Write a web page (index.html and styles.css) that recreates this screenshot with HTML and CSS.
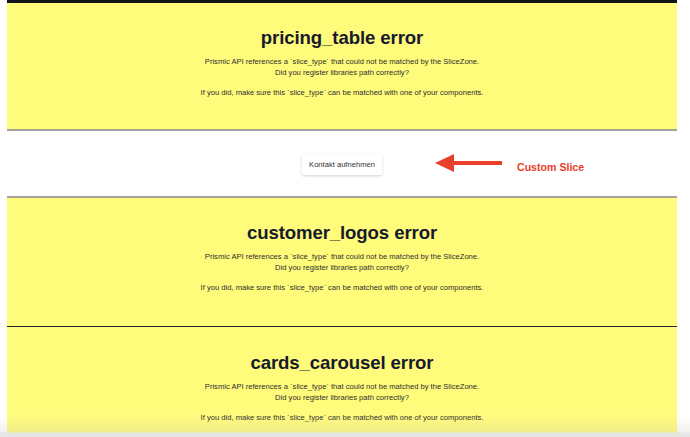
FILE: index.html
```html
<!DOCTYPE html>
<html lang="de">
<head>
<meta charset="utf-8">
<title>Slices</title>
<link rel="stylesheet" href="styles.css">
</head>
<body>
<main class="page">
  <div class="topbar"></div>
  <section class="slice-error">
    <h2 class="err-title">pricing_table error</h2>
    <p class="err-text">Prismic API references a `slice_type` that could not be matched by the SliceZone.<br>Did you register libraries path correctly?</p>
    <p class="err-text err-gap">If you did, make sure this `slice_type` can be matched with one of your components.</p>
  </section>
  <div class="sep sep-gray"></div>
  <section class="custom">
    <button class="btn">Kontakt aufnehmen</button>
  </section>
  <div class="sep sep-gray"></div>
  <section class="slice-error">
    <h2 class="err-title">customer_logos error</h2>
    <p class="err-text">Prismic API references a `slice_type` that could not be matched by the SliceZone.<br>Did you register libraries path correctly?</p>
    <p class="err-text err-gap">If you did, make sure this `slice_type` can be matched with one of your components.</p>
  </section>
  <div class="sep sep-dark"></div>
  <section class="slice-error slice-last">
    <h2 class="err-title">cards_carousel error</h2>
    <p class="err-text">Prismic API references a `slice_type` that could not be matched by the SliceZone.<br>Did you register libraries path correctly?</p>
    <p class="err-text err-gap">If you did, make sure this `slice_type` can be matched with one of your components.</p>
  </section>
</main>
<div class="annotation">
  <svg class="arrow" width="68" height="20" viewBox="0 0 68 20"><polygon points="0,10 19,1 19,8 67,8 67,12 19,12 19,19" fill="#e8402a"/></svg>
  <span class="anno-label">Custom Slice</span>
</div>
<div class="chrome-bottom"></div>
</body>
</html>
```
FILE: styles.css
```css
html, body {
  margin: 0;
  padding: 0;
  background: #ffffff;
}
body {
  font-family: "Liberation Sans", Arial, sans-serif;
  color: #1a1a2a;
}
.page {
  margin-left: 7px;
  width: 670px;
  display: flex;
  flex-direction: column;
}
.topbar {
  height: 3px;
  background: #111318;
}
.slice-error {
  background: #fffb7b;
  text-align: center;
  padding: 23px 0 31px;
}
.slice-last {
  padding-top: 24px;
}
.err-title {
  margin: 0 0 6px;
  font-size: 18.6px;
  line-height: 24px;
  font-weight: 700;
  color: #161a2c;
  letter-spacing: -0.1px;
}
.err-text {
  margin: 0;
  font-size: 7.6px;
  line-height: 11px;
  color: #2e2e2e;
}
.err-gap {
  margin-top: 9px;
}
.sep {
  height: 2px;
}
.sep-gray {
  background: #a3a39a;
}
.sep-dark {
  height: 1px;
  background: #23232b;
  border-top: 2px solid #fffb7b;
}
.custom {
  height: 65px;
  background: #ffffff;
  display: flex;
  align-items: center;
  justify-content: center;
}
.btn {
  width: 80px;
  height: 21px;
  margin-top: 1px;
  border: none;
  border-radius: 2px;
  background: #ffffff;
  box-shadow: 0 1px 3px rgba(0,0,0,0.18);
  font-family: "Liberation Sans", Arial, sans-serif;
  font-size: 7.6px;
  color: #333;
  padding: 0;
}
.annotation {
  position: absolute;
  left: 435px;
  top: 152px;
  display: flex;
  align-items: center;
  gap: 14px;
}
.anno-label {
  color: #e8402a;
  font-weight: 700;
  font-size: 10.6px;
  margin-top: 9px;
}
.chrome-bottom {
  position: fixed;
  left: 0;
  right: 0;
  bottom: 0;
  height: 22px;
  background: linear-gradient(to bottom, rgba(200,200,190,0) 0, rgba(200,200,190,0.25) 17px, #e6e6e6 18px, #e6e6e6 22px);
}
```
